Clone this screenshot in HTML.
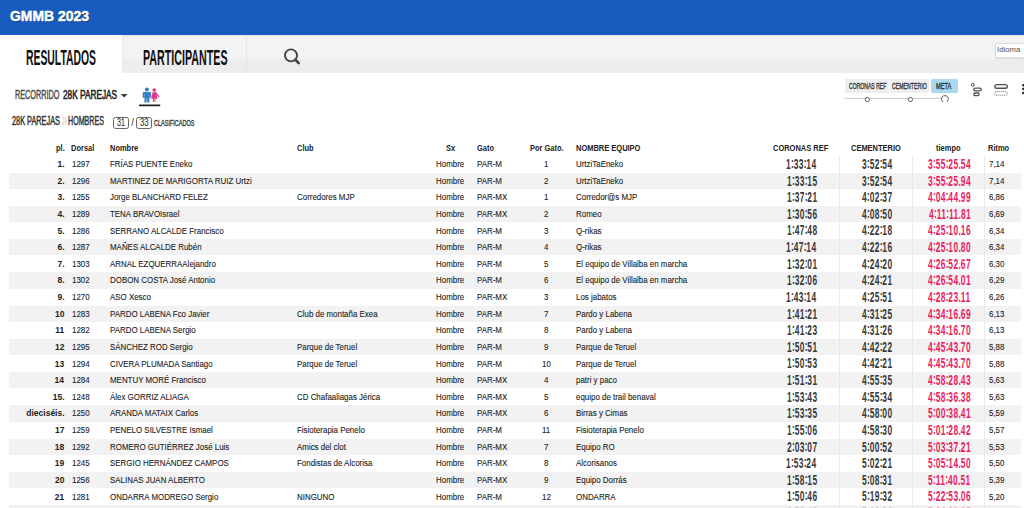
<!DOCTYPE html><html><head><meta charset="utf-8"><style>
*{margin:0;padding:0;box-sizing:border-box}
html,body{width:1024px;height:508px;overflow:hidden;background:#fff;position:relative;font-family:"Liberation Sans",sans-serif}
.t{position:absolute;white-space:nowrap;transform-origin:0 0}
.abs{position:absolute}
</style></head><body>
<div class="abs" style="left:0;top:0;width:1024px;height:35px;background:#185bbe"></div>
<div class="t" style="left:10.04px;top:9px;font-size:14.49px;line-height:14.49px;transform:scaleX(0.9628);color:#fff;font-weight:bold;-webkit-text-stroke:0.5px #fff;text-shadow:0.5px 0.7px 0.8px rgba(0,0,0,.45);">GMMB 2023</div>
<div class="abs" style="left:122px;top:35px;width:902px;height:37.5px;background:linear-gradient(#f3f3f3 0,#f3f3f3 24px,#ededed 24px);box-shadow:inset 0 1px 1.5px rgba(0,0,0,.07)"></div>
<div class="abs" style="left:246px;top:35px;width:1px;height:37.5px;background:#e3e3e3"></div>
<div class="abs" style="left:121.5px;top:35px;width:1px;height:37.5px;background:#e8e8e8"></div>
<div class="t" style="left:26.32px;top:48px;font-size:21.30px;line-height:21.30px;transform:scaleX(0.4878);color:#111;font-weight:bold;">RESULTADOS</div>
<div class="t" style="left:143.10px;top:48px;font-size:21.30px;line-height:21.30px;transform:scaleX(0.5022);color:#111;font-weight:bold;">PARTICIPANTES</div>
<svg class="abs" style="left:282px;top:48px" width="20" height="18" viewBox="0 0 20 18"><circle cx="9" cy="7.4" r="6.0" fill="none" stroke="#444" stroke-width="1.9"/><line x1="13.3" y1="11.7" x2="16.7" y2="15.1" stroke="#444" stroke-width="2.7" stroke-linecap="round"/></svg>
<div class="abs" style="left:994.7px;top:42.9px;width:32px;height:14.7px;background:#fff;border:1px solid #dcdcdc;border-radius:2px;box-shadow:0 0.5px 1px rgba(0,0,0,.08)"></div>
<div class="t" style="left:997.20px;top:46px;font-size:7.83px;line-height:7.83px;transform:scaleX(0.9880);color:#505050;">Idioma</div>
<div class="t" style="left:15.42px;top:88px;font-size:13.48px;line-height:13.48px;transform:scaleX(0.5405);color:#4a4a4a;-webkit-text-stroke:0.45px #4a4a4a;">RECORRIDO</div>
<div class="t" style="left:63.09px;top:88px;font-size:13.48px;line-height:13.48px;transform:scaleX(0.6136);color:#1e1e1e;-webkit-text-stroke:0.6px #1e1e1e;">28K PAREJAS</div>
<svg class="abs" style="left:120px;top:93px" width="9" height="6"><path d="M0.7 1.0 L7.7 1.0 L4.2 4.6 Z" fill="#3a3a3a"/></svg>
<svg class="abs" style="left:134px;top:84px" width="32" height="26" viewBox="0 0 32 26">
<circle cx="12.9" cy="5.6" r="2.0" fill="#2f7ec8"/>
<path d="M8.7 9.2 Q8.7 7.9 10 7.9 H15.85 Q17.15 7.9 17.15 9.2 V13.3 Q17.15 13.8 16.65 13.8 H15.4 V18.4 H13.2 V14.6 H12.65 V18.4 H10.5 V13.8 H9.2 Q8.7 13.8 8.7 13.3 Z" fill="#2f7ec8"/>
<path d="M10.5 9.6 V13.8 M15.4 9.6 V13.8" stroke="#fff" stroke-width="0.35" stroke-opacity="0.55"/>
<circle cx="20.2" cy="6.1" r="1.8" fill="#e5338b"/>
<path d="M18.6 8.2 H21.9 L23.55 14.85 H17.15 Z" fill="#e5338b"/>
<path d="M21.7 8.7 L24.8 12.6" stroke="#e5338b" stroke-width="1.3" stroke-linecap="round"/>
<rect x="18.9" y="14.5" width="1.15" height="3.3" fill="#e5338b"/>
<rect x="20.35" y="14.5" width="1.15" height="3.3" fill="#e5338b"/>
<rect x="4.9" y="20.5" width="21.5" height="1.8" rx="0.9" fill="#222"/>
</svg>
<div class="t" style="left:12.33px;top:116px;font-size:11.88px;line-height:11.88px;transform:scaleX(0.6176);color:#333;-webkit-text-stroke:0.45px #333;">28K PAREJAS</div>
<svg class="abs" style="left:60px;top:114px" width="10" height="14"><path d="M2.8 2.8 L4.3 6.8 L2.8 10.8 M4.9 2.8 L6.4 6.8 L4.9 10.8" fill="none" stroke="#c4c4c4" stroke-width="0.8"/></svg>
<div class="t" style="left:68.18px;top:116px;font-size:11.88px;line-height:11.88px;transform:scaleX(0.5999);color:#333;-webkit-text-stroke:0.45px #333;">HOMBRES</div>
<div class="abs" style="left:113.2px;top:117px;width:15.8px;height:11.7px;border:1px solid #666;border-radius:2.5px"></div>
<div class="t" style="left:116.82px;top:118px;font-size:10.14px;line-height:10.14px;transform:scaleX(0.7020);color:#333;-webkit-text-stroke:0.12px #333;">31</div>
<div class="abs" style="left:136.3px;top:117px;width:15.7px;height:11.7px;border:1px solid #666;border-radius:2.5px"></div>
<div class="t" style="left:140.19px;top:118px;font-size:10.14px;line-height:10.14px;transform:scaleX(0.7656);color:#333;-webkit-text-stroke:0.12px #333;">33</div>
<div class="t" style="left:131.20px;top:118px;font-size:10.00px;line-height:10.00px;transform:scaleX(1.0000);color:#444;">/</div>
<div class="t" style="left:154.42px;top:119px;font-size:9.28px;line-height:9.28px;transform:scaleX(0.5956);color:#333;-webkit-text-stroke:0.35px #333;">CLASIFICADOS</div>
<div class="abs" style="left:844.6px;top:79.1px;width:44.1px;height:14px;background:#eee"></div>
<div class="abs" style="left:890.3px;top:79.1px;width:38.7px;height:14px;background:#eee"></div>
<div class="abs" style="left:930.8px;top:79.1px;width:26.9px;height:14px;background:#a9d9ef;border-radius:1.5px"></div>
<div class="t" style="left:849.45px;top:82px;font-size:8.99px;line-height:8.99px;transform:scaleX(0.5668);color:#333;-webkit-text-stroke:0.35px #333;">CORONAS REF</div>
<div class="t" style="left:892.44px;top:82px;font-size:8.99px;line-height:8.99px;transform:scaleX(0.5810);color:#333;-webkit-text-stroke:0.35px #333;">CEMENTERIO</div>
<div class="t" style="left:935.85px;top:82px;font-size:8.99px;line-height:8.99px;transform:scaleX(0.6329);color:#333;-webkit-text-stroke:0.35px #333;">META</div>
<svg class="abs" style="left:840px;top:90px" width="120" height="16"><line x1="4.6" y1="8.3" x2="101" y2="8.3" stroke="#c8c8c8" stroke-width="1"/><circle cx="27.3" cy="9.5" r="2.1" fill="#fff" stroke="#555" stroke-width="0.95"/><circle cx="70.4" cy="9.5" r="2.1" fill="#fff" stroke="#555" stroke-width="0.95"/><path d="M103.2 12.0 A3.4 3.4 0 1 1 106.6 12.0" fill="#fff" stroke="#555" stroke-width="1"/></svg>
<svg class="abs" style="left:964px;top:76px" width="60" height="28"><circle cx="8.9" cy="8.9" r="1.45" fill="none" stroke="#505050" stroke-width="1"/><rect x="9.75" y="12.05" width="7.5" height="2.9" rx="1.45" fill="none" stroke="#505050" stroke-width="1.3"/><rect x="9.75" y="17.0" width="5.4" height="2.6" rx="1.3" fill="none" stroke="#505050" stroke-width="1.3"/><rect x="30.85" y="8.55" width="12.4" height="3.7" rx="1.85" fill="none" stroke="#505050" stroke-width="1.35"/><rect x="30.85" y="15.55" width="12.4" height="3.7" rx="1.85" fill="none" stroke="#9a9a9a" stroke-width="1.1" stroke-dasharray="1.4 0.6"/><rect x="58" y="7.9" width="3.2" height="2.5" rx="1.1" fill="#333"/><rect x="58" y="11.7" width="3.2" height="2.5" rx="1.1" fill="#333"/><rect x="58" y="15.8" width="3.2" height="2.5" rx="1.1" fill="#333"/></svg>
<div class="t" style="left:55.77px;top:144px;font-size:8.50px;line-height:8.50px;transform:scaleX(0.8800);color:#222;font-weight:bold;">pl.</div>
<div class="t" style="left:71.11px;top:144px;font-size:8.50px;line-height:8.50px;transform:scaleX(0.8800);color:#222;font-weight:bold;">Dorsal</div>
<div class="t" style="left:109.61px;top:144px;font-size:8.50px;line-height:8.50px;transform:scaleX(0.8800);color:#222;font-weight:bold;">Nombre</div>
<div class="t" style="left:296.70px;top:144px;font-size:8.50px;line-height:8.50px;transform:scaleX(0.8800);color:#222;font-weight:bold;">Club</div>
<div class="t" style="left:445.54px;top:144px;font-size:8.50px;line-height:8.50px;transform:scaleX(0.8800);color:#222;font-weight:bold;">Sx</div>
<div class="t" style="left:476.70px;top:144px;font-size:8.50px;line-height:8.50px;transform:scaleX(0.8800);color:#222;font-weight:bold;">Gato</div>
<div class="t" style="left:529.77px;top:144px;font-size:8.50px;line-height:8.50px;transform:scaleX(0.8800);color:#222;font-weight:bold;">Por Gato.</div>
<div class="t" style="left:575.61px;top:144px;font-size:8.50px;line-height:8.50px;transform:scaleX(0.8800);color:#222;font-weight:bold;">NOMBRE EQUIPO</div>
<div class="t" style="left:773.14px;top:144px;font-size:8.50px;line-height:8.50px;transform:scaleX(0.8800);color:#222;font-weight:bold;">CORONAS REF</div>
<div class="t" style="left:851.27px;top:144px;font-size:8.50px;line-height:8.50px;transform:scaleX(0.8800);color:#222;font-weight:bold;">CEMENTERIO</div>
<div class="t" style="left:936.36px;top:144px;font-size:8.50px;line-height:8.50px;transform:scaleX(0.8800);color:#222;font-weight:bold;">tiempo</div>
<div class="t" style="left:988.21px;top:144px;font-size:8.50px;line-height:8.50px;transform:scaleX(0.8800);color:#222;font-weight:bold;">Ritmo</div>
<div class="abs" style="left:9.4px;top:172.72px;width:1011.6px;height:16.15px;background:#f2f2f2"></div>
<div class="abs" style="left:9.4px;top:205.96px;width:1011.6px;height:16.15px;background:#f2f2f2"></div>
<div class="abs" style="left:9.4px;top:239.20px;width:1011.6px;height:16.15px;background:#f2f2f2"></div>
<div class="abs" style="left:9.4px;top:272.44px;width:1011.6px;height:16.15px;background:#f2f2f2"></div>
<div class="abs" style="left:9.4px;top:305.68px;width:1011.6px;height:16.15px;background:#f2f2f2"></div>
<div class="abs" style="left:9.4px;top:338.92px;width:1011.6px;height:16.15px;background:#f2f2f2"></div>
<div class="abs" style="left:9.4px;top:372.16px;width:1011.6px;height:16.15px;background:#f2f2f2"></div>
<div class="abs" style="left:9.4px;top:405.40px;width:1011.6px;height:16.15px;background:#f2f2f2"></div>
<div class="abs" style="left:9.4px;top:438.64px;width:1011.6px;height:16.15px;background:#f2f2f2"></div>
<div class="abs" style="left:9.4px;top:471.88px;width:1011.6px;height:16.15px;background:#f2f2f2"></div>
<div class="abs" style="left:9.4px;top:505.12px;width:1011.6px;height:16.15px;background:#f2f2f2"></div>
<div class="abs" style="left:838.95px;top:155.8px;width:1.5px;height:360px;background:#e9e9e9"></div>
<div class="abs" style="left:911.85px;top:155.8px;width:1.5px;height:360px;background:#e9e9e9"></div>
<div class="abs" style="left:983.75px;top:155.8px;width:1.5px;height:360px;background:#e9e9e9"></div>
<div class="t" style="left:57.50px;top:160px;font-size:8.50px;line-height:8.50px;transform:scaleX(1.0000);color:#222;font-weight:bold;">1.</div>
<div class="t" style="left:71.91px;top:160px;font-size:8.50px;line-height:8.50px;transform:scaleX(0.9320);color:#222;-webkit-text-stroke:0.1px #222;">1297</div>
<div class="t" style="left:110.26px;top:160px;font-size:8.50px;line-height:8.50px;transform:scaleX(0.9320);color:#222;-webkit-text-stroke:0.1px #222;">FRÍAS PUENTE Eneko</div>
<div class="t" style="left:435.68px;top:160px;font-size:8.50px;line-height:8.50px;transform:scaleX(0.9320);color:#222;-webkit-text-stroke:0.1px #222;">Hombre</div>
<div class="t" style="left:477.16px;top:160px;font-size:8.50px;line-height:8.50px;transform:scaleX(0.9320);color:#222;-webkit-text-stroke:0.1px #222;">PAR-M</div>
<div class="t" style="left:544.08px;top:160px;font-size:8.50px;line-height:8.50px;transform:scaleX(0.9320);color:#222;-webkit-text-stroke:0.1px #222;">1</div>
<div class="t" style="left:576.26px;top:160px;font-size:8.50px;line-height:8.50px;transform:scaleX(0.9320);color:#222;-webkit-text-stroke:0.1px #222;">UrtziTaEneko</div>
<div class="t" style="left:786.46px;top:157px;font-size:14.60px;line-height:14.60px;letter-spacing:0.65px;transform:scaleX(0.5750);color:#3a3a3a;font-weight:bold;">1<span style="letter-spacing:-0.34px;position:relative;top:-1.3px">:</span>33<span style="letter-spacing:-0.34px;position:relative;top:-1.3px">:</span>14</div>
<div class="t" style="left:861.80px;top:157px;font-size:14.60px;line-height:14.60px;letter-spacing:0.65px;transform:scaleX(0.5750);color:#3a3a3a;font-weight:bold;">3<span style="letter-spacing:-0.34px;position:relative;top:-1.3px">:</span>52<span style="letter-spacing:-0.34px;position:relative;top:-1.3px">:</span>54</div>
<div class="t" style="left:928.06px;top:157px;font-size:14.60px;line-height:14.60px;letter-spacing:0.65px;transform:scaleX(0.5750);color:#e91e63;font-weight:bold;">3<span style="letter-spacing:-0.34px;position:relative;top:-1.3px">:</span>55<span style="letter-spacing:-0.34px;position:relative;top:-1.3px">:</span>25<span style="letter-spacing:0.12px">.</span>54</div>
<div class="t" style="left:989.36px;top:160px;font-size:8.50px;line-height:8.50px;transform:scaleX(0.9320);color:#222;-webkit-text-stroke:0.1px #222;">7,14</div>
<div class="t" style="left:57.50px;top:177px;font-size:8.50px;line-height:8.50px;transform:scaleX(1.0000);color:#222;font-weight:bold;">2.</div>
<div class="t" style="left:71.91px;top:177px;font-size:8.50px;line-height:8.50px;transform:scaleX(0.9320);color:#222;-webkit-text-stroke:0.1px #222;">1296</div>
<div class="t" style="left:110.26px;top:177px;font-size:8.50px;line-height:8.50px;transform:scaleX(0.9320);color:#222;-webkit-text-stroke:0.1px #222;">MARTINEZ DE MARIGORTA RUIZ Urtzi</div>
<div class="t" style="left:435.68px;top:177px;font-size:8.50px;line-height:8.50px;transform:scaleX(0.9320);color:#222;-webkit-text-stroke:0.1px #222;">Hombre</div>
<div class="t" style="left:477.16px;top:177px;font-size:8.50px;line-height:8.50px;transform:scaleX(0.9320);color:#222;-webkit-text-stroke:0.1px #222;">PAR-M</div>
<div class="t" style="left:544.20px;top:177px;font-size:8.50px;line-height:8.50px;transform:scaleX(0.9320);color:#222;-webkit-text-stroke:0.1px #222;">2</div>
<div class="t" style="left:576.26px;top:177px;font-size:8.50px;line-height:8.50px;transform:scaleX(0.9320);color:#222;-webkit-text-stroke:0.1px #222;">UrtziTaEneko</div>
<div class="t" style="left:786.54px;top:174px;font-size:14.60px;line-height:14.60px;letter-spacing:0.65px;transform:scaleX(0.5750);color:#3a3a3a;font-weight:bold;">1<span style="letter-spacing:-0.34px;position:relative;top:-1.3px">:</span>33<span style="letter-spacing:-0.34px;position:relative;top:-1.3px">:</span>15</div>
<div class="t" style="left:861.80px;top:174px;font-size:14.60px;line-height:14.60px;letter-spacing:0.65px;transform:scaleX(0.5750);color:#3a3a3a;font-weight:bold;">3<span style="letter-spacing:-0.34px;position:relative;top:-1.3px">:</span>52<span style="letter-spacing:-0.34px;position:relative;top:-1.3px">:</span>54</div>
<div class="t" style="left:928.06px;top:174px;font-size:14.60px;line-height:14.60px;letter-spacing:0.65px;transform:scaleX(0.5750);color:#e91e63;font-weight:bold;">3<span style="letter-spacing:-0.34px;position:relative;top:-1.3px">:</span>55<span style="letter-spacing:-0.34px;position:relative;top:-1.3px">:</span>25<span style="letter-spacing:0.12px">.</span>94</div>
<div class="t" style="left:989.36px;top:177px;font-size:8.50px;line-height:8.50px;transform:scaleX(0.9320);color:#222;-webkit-text-stroke:0.1px #222;">7,14</div>
<div class="t" style="left:57.50px;top:193px;font-size:8.50px;line-height:8.50px;transform:scaleX(1.0000);color:#222;font-weight:bold;">3.</div>
<div class="t" style="left:71.91px;top:193px;font-size:8.50px;line-height:8.50px;transform:scaleX(0.9320);color:#222;-webkit-text-stroke:0.1px #222;">1255</div>
<div class="t" style="left:110.26px;top:193px;font-size:8.50px;line-height:8.50px;transform:scaleX(0.9320);color:#222;-webkit-text-stroke:0.1px #222;">Jorge BLANCHARD FELEZ</div>
<div class="t" style="left:297.16px;top:193px;font-size:8.50px;line-height:8.50px;transform:scaleX(0.9320);color:#222;-webkit-text-stroke:0.1px #222;">Corredores MJP</div>
<div class="t" style="left:435.68px;top:193px;font-size:8.50px;line-height:8.50px;transform:scaleX(0.9320);color:#222;-webkit-text-stroke:0.1px #222;">Hombre</div>
<div class="t" style="left:477.16px;top:193px;font-size:8.50px;line-height:8.50px;transform:scaleX(0.9320);color:#222;-webkit-text-stroke:0.1px #222;">PAR-MX</div>
<div class="t" style="left:544.08px;top:193px;font-size:8.50px;line-height:8.50px;transform:scaleX(0.9320);color:#222;-webkit-text-stroke:0.1px #222;">1</div>
<div class="t" style="left:576.26px;top:193px;font-size:8.50px;line-height:8.50px;transform:scaleX(0.9320);color:#222;-webkit-text-stroke:0.1px #222;">Corredor@s MJP</div>
<div class="t" style="left:786.54px;top:190px;font-size:14.60px;line-height:14.60px;letter-spacing:0.65px;transform:scaleX(0.5750);color:#3a3a3a;font-weight:bold;">1<span style="letter-spacing:-0.34px;position:relative;top:-1.3px">:</span>37<span style="letter-spacing:-0.34px;position:relative;top:-1.3px">:</span>21</div>
<div class="t" style="left:861.99px;top:190px;font-size:14.60px;line-height:14.60px;letter-spacing:0.65px;transform:scaleX(0.5750);color:#3a3a3a;font-weight:bold;">4<span style="letter-spacing:-0.34px;position:relative;top:-1.3px">:</span>02<span style="letter-spacing:-0.34px;position:relative;top:-1.3px">:</span>37</div>
<div class="t" style="left:928.23px;top:190px;font-size:14.60px;line-height:14.60px;letter-spacing:0.65px;transform:scaleX(0.5750);color:#e91e63;font-weight:bold;">4<span style="letter-spacing:-0.34px;position:relative;top:-1.3px">:</span>04<span style="letter-spacing:-0.34px;position:relative;top:-1.3px">:</span>44<span style="letter-spacing:0.12px">.</span>99</div>
<div class="t" style="left:989.36px;top:193px;font-size:8.50px;line-height:8.50px;transform:scaleX(0.9320);color:#222;-webkit-text-stroke:0.1px #222;">6,86</div>
<div class="t" style="left:57.50px;top:210px;font-size:8.50px;line-height:8.50px;transform:scaleX(1.0000);color:#222;font-weight:bold;">4.</div>
<div class="t" style="left:71.91px;top:210px;font-size:8.50px;line-height:8.50px;transform:scaleX(0.9320);color:#222;-webkit-text-stroke:0.1px #222;">1289</div>
<div class="t" style="left:110.26px;top:210px;font-size:8.50px;line-height:8.50px;transform:scaleX(0.9320);color:#222;-webkit-text-stroke:0.1px #222;">TENA BRAVOIsrael</div>
<div class="t" style="left:435.68px;top:210px;font-size:8.50px;line-height:8.50px;transform:scaleX(0.9320);color:#222;-webkit-text-stroke:0.1px #222;">Hombre</div>
<div class="t" style="left:477.16px;top:210px;font-size:8.50px;line-height:8.50px;transform:scaleX(0.9320);color:#222;-webkit-text-stroke:0.1px #222;">PAR-MX</div>
<div class="t" style="left:544.20px;top:210px;font-size:8.50px;line-height:8.50px;transform:scaleX(0.9320);color:#222;-webkit-text-stroke:0.1px #222;">2</div>
<div class="t" style="left:576.26px;top:210px;font-size:8.50px;line-height:8.50px;transform:scaleX(0.9320);color:#222;-webkit-text-stroke:0.1px #222;">Romeo</div>
<div class="t" style="left:786.58px;top:207px;font-size:14.60px;line-height:14.60px;letter-spacing:0.65px;transform:scaleX(0.5750);color:#3a3a3a;font-weight:bold;">1<span style="letter-spacing:-0.34px;position:relative;top:-1.3px">:</span>30<span style="letter-spacing:-0.34px;position:relative;top:-1.3px">:</span>56</div>
<div class="t" style="left:861.99px;top:207px;font-size:14.60px;line-height:14.60px;letter-spacing:0.65px;transform:scaleX(0.5750);color:#3a3a3a;font-weight:bold;">4<span style="letter-spacing:-0.34px;position:relative;top:-1.3px">:</span>08<span style="letter-spacing:-0.34px;position:relative;top:-1.3px">:</span>50</div>
<div class="t" style="left:928.65px;top:207px;font-size:14.60px;line-height:14.60px;letter-spacing:0.65px;transform:scaleX(0.5750);color:#e91e63;font-weight:bold;">4<span style="letter-spacing:-0.34px;position:relative;top:-1.3px">:</span>11<span style="letter-spacing:-0.34px;position:relative;top:-1.3px">:</span>11<span style="letter-spacing:0.12px">.</span>81</div>
<div class="t" style="left:989.36px;top:210px;font-size:8.50px;line-height:8.50px;transform:scaleX(0.9320);color:#222;-webkit-text-stroke:0.1px #222;">6,69</div>
<div class="t" style="left:57.50px;top:227px;font-size:8.50px;line-height:8.50px;transform:scaleX(1.0000);color:#222;font-weight:bold;">5.</div>
<div class="t" style="left:71.91px;top:227px;font-size:8.50px;line-height:8.50px;transform:scaleX(0.9320);color:#222;-webkit-text-stroke:0.1px #222;">1286</div>
<div class="t" style="left:110.26px;top:227px;font-size:8.50px;line-height:8.50px;transform:scaleX(0.9320);color:#222;-webkit-text-stroke:0.1px #222;">SERRANO ALCALDE Francisco</div>
<div class="t" style="left:435.68px;top:227px;font-size:8.50px;line-height:8.50px;transform:scaleX(0.9320);color:#222;-webkit-text-stroke:0.1px #222;">Hombre</div>
<div class="t" style="left:477.16px;top:227px;font-size:8.50px;line-height:8.50px;transform:scaleX(0.9320);color:#222;-webkit-text-stroke:0.1px #222;">PAR-M</div>
<div class="t" style="left:544.20px;top:227px;font-size:8.50px;line-height:8.50px;transform:scaleX(0.9320);color:#222;-webkit-text-stroke:0.1px #222;">3</div>
<div class="t" style="left:576.26px;top:227px;font-size:8.50px;line-height:8.50px;transform:scaleX(0.9320);color:#222;-webkit-text-stroke:0.1px #222;">Q-rikas</div>
<div class="t" style="left:786.56px;top:223px;font-size:14.60px;line-height:14.60px;letter-spacing:0.65px;transform:scaleX(0.5750);color:#3a3a3a;font-weight:bold;">1<span style="letter-spacing:-0.34px;position:relative;top:-1.3px">:</span>47<span style="letter-spacing:-0.34px;position:relative;top:-1.3px">:</span>48</div>
<div class="t" style="left:861.95px;top:223px;font-size:14.60px;line-height:14.60px;letter-spacing:0.65px;transform:scaleX(0.5750);color:#3a3a3a;font-weight:bold;">4<span style="letter-spacing:-0.34px;position:relative;top:-1.3px">:</span>22<span style="letter-spacing:-0.34px;position:relative;top:-1.3px">:</span>18</div>
<div class="t" style="left:928.23px;top:223px;font-size:14.60px;line-height:14.60px;letter-spacing:0.65px;transform:scaleX(0.5750);color:#e91e63;font-weight:bold;">4<span style="letter-spacing:-0.34px;position:relative;top:-1.3px">:</span>25<span style="letter-spacing:-0.34px;position:relative;top:-1.3px">:</span>10<span style="letter-spacing:0.12px">.</span>16</div>
<div class="t" style="left:989.36px;top:227px;font-size:8.50px;line-height:8.50px;transform:scaleX(0.9320);color:#222;-webkit-text-stroke:0.1px #222;">6,34</div>
<div class="t" style="left:57.50px;top:243px;font-size:8.50px;line-height:8.50px;transform:scaleX(1.0000);color:#222;font-weight:bold;">6.</div>
<div class="t" style="left:71.91px;top:243px;font-size:8.50px;line-height:8.50px;transform:scaleX(0.9320);color:#222;-webkit-text-stroke:0.1px #222;">1287</div>
<div class="t" style="left:110.26px;top:243px;font-size:8.50px;line-height:8.50px;transform:scaleX(0.9320);color:#222;-webkit-text-stroke:0.1px #222;">MAÑES ALCALDE Rubén</div>
<div class="t" style="left:435.68px;top:243px;font-size:8.50px;line-height:8.50px;transform:scaleX(0.9320);color:#222;-webkit-text-stroke:0.1px #222;">Hombre</div>
<div class="t" style="left:477.16px;top:243px;font-size:8.50px;line-height:8.50px;transform:scaleX(0.9320);color:#222;-webkit-text-stroke:0.1px #222;">PAR-M</div>
<div class="t" style="left:544.24px;top:243px;font-size:8.50px;line-height:8.50px;transform:scaleX(0.9320);color:#222;-webkit-text-stroke:0.1px #222;">4</div>
<div class="t" style="left:576.26px;top:243px;font-size:8.50px;line-height:8.50px;transform:scaleX(0.9320);color:#222;-webkit-text-stroke:0.1px #222;">Q-rikas</div>
<div class="t" style="left:786.46px;top:240px;font-size:14.60px;line-height:14.60px;letter-spacing:0.65px;transform:scaleX(0.5750);color:#3a3a3a;font-weight:bold;">1<span style="letter-spacing:-0.34px;position:relative;top:-1.3px">:</span>47<span style="letter-spacing:-0.34px;position:relative;top:-1.3px">:</span>14</div>
<div class="t" style="left:861.97px;top:240px;font-size:14.60px;line-height:14.60px;letter-spacing:0.65px;transform:scaleX(0.5750);color:#3a3a3a;font-weight:bold;">4<span style="letter-spacing:-0.34px;position:relative;top:-1.3px">:</span>22<span style="letter-spacing:-0.34px;position:relative;top:-1.3px">:</span>16</div>
<div class="t" style="left:928.25px;top:240px;font-size:14.60px;line-height:14.60px;letter-spacing:0.65px;transform:scaleX(0.5750);color:#e91e63;font-weight:bold;">4<span style="letter-spacing:-0.34px;position:relative;top:-1.3px">:</span>25<span style="letter-spacing:-0.34px;position:relative;top:-1.3px">:</span>10<span style="letter-spacing:0.12px">.</span>80</div>
<div class="t" style="left:989.36px;top:243px;font-size:8.50px;line-height:8.50px;transform:scaleX(0.9320);color:#222;-webkit-text-stroke:0.1px #222;">6,34</div>
<div class="t" style="left:57.50px;top:260px;font-size:8.50px;line-height:8.50px;transform:scaleX(1.0000);color:#222;font-weight:bold;">7.</div>
<div class="t" style="left:71.91px;top:260px;font-size:8.50px;line-height:8.50px;transform:scaleX(0.9320);color:#222;-webkit-text-stroke:0.1px #222;">1303</div>
<div class="t" style="left:110.26px;top:260px;font-size:8.50px;line-height:8.50px;transform:scaleX(0.9320);color:#222;-webkit-text-stroke:0.1px #222;">ARNAL EZQUERRAAlejandro</div>
<div class="t" style="left:435.68px;top:260px;font-size:8.50px;line-height:8.50px;transform:scaleX(0.9320);color:#222;-webkit-text-stroke:0.1px #222;">Hombre</div>
<div class="t" style="left:477.16px;top:260px;font-size:8.50px;line-height:8.50px;transform:scaleX(0.9320);color:#222;-webkit-text-stroke:0.1px #222;">PAR-M</div>
<div class="t" style="left:544.20px;top:260px;font-size:8.50px;line-height:8.50px;transform:scaleX(0.9320);color:#222;-webkit-text-stroke:0.1px #222;">5</div>
<div class="t" style="left:576.26px;top:260px;font-size:8.50px;line-height:8.50px;transform:scaleX(0.9320);color:#222;-webkit-text-stroke:0.1px #222;">El equipo de Villalba en marcha</div>
<div class="t" style="left:786.54px;top:257px;font-size:14.60px;line-height:14.60px;letter-spacing:0.65px;transform:scaleX(0.5750);color:#3a3a3a;font-weight:bold;">1<span style="letter-spacing:-0.34px;position:relative;top:-1.3px">:</span>32<span style="letter-spacing:-0.34px;position:relative;top:-1.3px">:</span>01</div>
<div class="t" style="left:861.99px;top:257px;font-size:14.60px;line-height:14.60px;letter-spacing:0.65px;transform:scaleX(0.5750);color:#3a3a3a;font-weight:bold;">4<span style="letter-spacing:-0.34px;position:relative;top:-1.3px">:</span>24<span style="letter-spacing:-0.34px;position:relative;top:-1.3px">:</span>20</div>
<div class="t" style="left:928.25px;top:257px;font-size:14.60px;line-height:14.60px;letter-spacing:0.65px;transform:scaleX(0.5750);color:#e91e63;font-weight:bold;">4<span style="letter-spacing:-0.34px;position:relative;top:-1.3px">:</span>26<span style="letter-spacing:-0.34px;position:relative;top:-1.3px">:</span>52<span style="letter-spacing:0.12px">.</span>67</div>
<div class="t" style="left:989.36px;top:260px;font-size:8.50px;line-height:8.50px;transform:scaleX(0.9320);color:#222;-webkit-text-stroke:0.1px #222;">6,30</div>
<div class="t" style="left:57.50px;top:276px;font-size:8.50px;line-height:8.50px;transform:scaleX(1.0000);color:#222;font-weight:bold;">8.</div>
<div class="t" style="left:71.91px;top:276px;font-size:8.50px;line-height:8.50px;transform:scaleX(0.9320);color:#222;-webkit-text-stroke:0.1px #222;">1302</div>
<div class="t" style="left:110.26px;top:276px;font-size:8.50px;line-height:8.50px;transform:scaleX(0.9320);color:#222;-webkit-text-stroke:0.1px #222;">DOBON COSTA José Antonio</div>
<div class="t" style="left:435.68px;top:276px;font-size:8.50px;line-height:8.50px;transform:scaleX(0.9320);color:#222;-webkit-text-stroke:0.1px #222;">Hombre</div>
<div class="t" style="left:477.16px;top:276px;font-size:8.50px;line-height:8.50px;transform:scaleX(0.9320);color:#222;-webkit-text-stroke:0.1px #222;">PAR-M</div>
<div class="t" style="left:544.16px;top:276px;font-size:8.50px;line-height:8.50px;transform:scaleX(0.9320);color:#222;-webkit-text-stroke:0.1px #222;">6</div>
<div class="t" style="left:576.26px;top:276px;font-size:8.50px;line-height:8.50px;transform:scaleX(0.9320);color:#222;-webkit-text-stroke:0.1px #222;">El equipo de Villalba en marcha</div>
<div class="t" style="left:786.58px;top:273px;font-size:14.60px;line-height:14.60px;letter-spacing:0.65px;transform:scaleX(0.5750);color:#3a3a3a;font-weight:bold;">1<span style="letter-spacing:-0.34px;position:relative;top:-1.3px">:</span>32<span style="letter-spacing:-0.34px;position:relative;top:-1.3px">:</span>06</div>
<div class="t" style="left:861.93px;top:273px;font-size:14.60px;line-height:14.60px;letter-spacing:0.65px;transform:scaleX(0.5750);color:#3a3a3a;font-weight:bold;">4<span style="letter-spacing:-0.34px;position:relative;top:-1.3px">:</span>24<span style="letter-spacing:-0.34px;position:relative;top:-1.3px">:</span>21</div>
<div class="t" style="left:928.19px;top:273px;font-size:14.60px;line-height:14.60px;letter-spacing:0.65px;transform:scaleX(0.5750);color:#e91e63;font-weight:bold;">4<span style="letter-spacing:-0.34px;position:relative;top:-1.3px">:</span>26<span style="letter-spacing:-0.34px;position:relative;top:-1.3px">:</span>54<span style="letter-spacing:0.12px">.</span>01</div>
<div class="t" style="left:989.36px;top:276px;font-size:8.50px;line-height:8.50px;transform:scaleX(0.9320);color:#222;-webkit-text-stroke:0.1px #222;">6,29</div>
<div class="t" style="left:57.50px;top:293px;font-size:8.50px;line-height:8.50px;transform:scaleX(1.0000);color:#222;font-weight:bold;">9.</div>
<div class="t" style="left:71.91px;top:293px;font-size:8.50px;line-height:8.50px;transform:scaleX(0.9320);color:#222;-webkit-text-stroke:0.1px #222;">1270</div>
<div class="t" style="left:110.26px;top:293px;font-size:8.50px;line-height:8.50px;transform:scaleX(0.9320);color:#222;-webkit-text-stroke:0.1px #222;">ASO Xesco</div>
<div class="t" style="left:435.68px;top:293px;font-size:8.50px;line-height:8.50px;transform:scaleX(0.9320);color:#222;-webkit-text-stroke:0.1px #222;">Hombre</div>
<div class="t" style="left:477.16px;top:293px;font-size:8.50px;line-height:8.50px;transform:scaleX(0.9320);color:#222;-webkit-text-stroke:0.1px #222;">PAR-MX</div>
<div class="t" style="left:544.20px;top:293px;font-size:8.50px;line-height:8.50px;transform:scaleX(0.9320);color:#222;-webkit-text-stroke:0.1px #222;">3</div>
<div class="t" style="left:576.26px;top:293px;font-size:8.50px;line-height:8.50px;transform:scaleX(0.9320);color:#222;-webkit-text-stroke:0.1px #222;">Los jabatos</div>
<div class="t" style="left:786.46px;top:290px;font-size:14.60px;line-height:14.60px;letter-spacing:0.65px;transform:scaleX(0.5750);color:#3a3a3a;font-weight:bold;">1<span style="letter-spacing:-0.34px;position:relative;top:-1.3px">:</span>43<span style="letter-spacing:-0.34px;position:relative;top:-1.3px">:</span>14</div>
<div class="t" style="left:861.93px;top:290px;font-size:14.60px;line-height:14.60px;letter-spacing:0.65px;transform:scaleX(0.5750);color:#3a3a3a;font-weight:bold;">4<span style="letter-spacing:-0.34px;position:relative;top:-1.3px">:</span>25<span style="letter-spacing:-0.34px;position:relative;top:-1.3px">:</span>51</div>
<div class="t" style="left:928.42px;top:290px;font-size:14.60px;line-height:14.60px;letter-spacing:0.65px;transform:scaleX(0.5750);color:#e91e63;font-weight:bold;">4<span style="letter-spacing:-0.34px;position:relative;top:-1.3px">:</span>28<span style="letter-spacing:-0.34px;position:relative;top:-1.3px">:</span>23<span style="letter-spacing:0.12px">.</span>11</div>
<div class="t" style="left:989.36px;top:293px;font-size:8.50px;line-height:8.50px;transform:scaleX(0.9320);color:#222;-webkit-text-stroke:0.1px #222;">6,26</div>
<div class="t" style="left:54.91px;top:310px;font-size:8.50px;line-height:8.50px;transform:scaleX(1.0000);color:#222;font-weight:bold;">10</div>
<div class="t" style="left:71.91px;top:310px;font-size:8.50px;line-height:8.50px;transform:scaleX(0.9320);color:#222;-webkit-text-stroke:0.1px #222;">1283</div>
<div class="t" style="left:110.26px;top:310px;font-size:8.50px;line-height:8.50px;transform:scaleX(0.9320);color:#222;-webkit-text-stroke:0.1px #222;">PARDO LABENA Fco Javier</div>
<div class="t" style="left:297.16px;top:310px;font-size:8.50px;line-height:8.50px;transform:scaleX(0.9320);color:#222;-webkit-text-stroke:0.1px #222;">Club de montaña Exea</div>
<div class="t" style="left:435.68px;top:310px;font-size:8.50px;line-height:8.50px;transform:scaleX(0.9320);color:#222;-webkit-text-stroke:0.1px #222;">Hombre</div>
<div class="t" style="left:477.16px;top:310px;font-size:8.50px;line-height:8.50px;transform:scaleX(0.9320);color:#222;-webkit-text-stroke:0.1px #222;">PAR-M</div>
<div class="t" style="left:544.20px;top:310px;font-size:8.50px;line-height:8.50px;transform:scaleX(0.9320);color:#222;-webkit-text-stroke:0.1px #222;">7</div>
<div class="t" style="left:576.26px;top:310px;font-size:8.50px;line-height:8.50px;transform:scaleX(0.9320);color:#222;-webkit-text-stroke:0.1px #222;">Pardo y Labena</div>
<div class="t" style="left:786.54px;top:307px;font-size:14.60px;line-height:14.60px;letter-spacing:0.65px;transform:scaleX(0.5750);color:#3a3a3a;font-weight:bold;">1<span style="letter-spacing:-0.34px;position:relative;top:-1.3px">:</span>41<span style="letter-spacing:-0.34px;position:relative;top:-1.3px">:</span>21</div>
<div class="t" style="left:861.93px;top:307px;font-size:14.60px;line-height:14.60px;letter-spacing:0.65px;transform:scaleX(0.5750);color:#3a3a3a;font-weight:bold;">4<span style="letter-spacing:-0.34px;position:relative;top:-1.3px">:</span>31<span style="letter-spacing:-0.34px;position:relative;top:-1.3px">:</span>25</div>
<div class="t" style="left:928.23px;top:307px;font-size:14.60px;line-height:14.60px;letter-spacing:0.65px;transform:scaleX(0.5750);color:#e91e63;font-weight:bold;">4<span style="letter-spacing:-0.34px;position:relative;top:-1.3px">:</span>34<span style="letter-spacing:-0.34px;position:relative;top:-1.3px">:</span>16<span style="letter-spacing:0.12px">.</span>69</div>
<div class="t" style="left:989.36px;top:310px;font-size:8.50px;line-height:8.50px;transform:scaleX(0.9320);color:#222;-webkit-text-stroke:0.1px #222;">6,13</div>
<div class="t" style="left:55.24px;top:326px;font-size:8.50px;line-height:8.50px;transform:scaleX(1.0000);color:#222;font-weight:bold;">11</div>
<div class="t" style="left:71.91px;top:326px;font-size:8.50px;line-height:8.50px;transform:scaleX(0.9320);color:#222;-webkit-text-stroke:0.1px #222;">1282</div>
<div class="t" style="left:110.26px;top:326px;font-size:8.50px;line-height:8.50px;transform:scaleX(0.9320);color:#222;-webkit-text-stroke:0.1px #222;">PARDO LABENA Sergio</div>
<div class="t" style="left:435.68px;top:326px;font-size:8.50px;line-height:8.50px;transform:scaleX(0.9320);color:#222;-webkit-text-stroke:0.1px #222;">Hombre</div>
<div class="t" style="left:477.16px;top:326px;font-size:8.50px;line-height:8.50px;transform:scaleX(0.9320);color:#222;-webkit-text-stroke:0.1px #222;">PAR-M</div>
<div class="t" style="left:544.18px;top:326px;font-size:8.50px;line-height:8.50px;transform:scaleX(0.9320);color:#222;-webkit-text-stroke:0.1px #222;">8</div>
<div class="t" style="left:576.26px;top:326px;font-size:8.50px;line-height:8.50px;transform:scaleX(0.9320);color:#222;-webkit-text-stroke:0.1px #222;">Pardo y Labena</div>
<div class="t" style="left:786.58px;top:323px;font-size:14.60px;line-height:14.60px;letter-spacing:0.65px;transform:scaleX(0.5750);color:#3a3a3a;font-weight:bold;">1<span style="letter-spacing:-0.34px;position:relative;top:-1.3px">:</span>41<span style="letter-spacing:-0.34px;position:relative;top:-1.3px">:</span>23</div>
<div class="t" style="left:861.97px;top:323px;font-size:14.60px;line-height:14.60px;letter-spacing:0.65px;transform:scaleX(0.5750);color:#3a3a3a;font-weight:bold;">4<span style="letter-spacing:-0.34px;position:relative;top:-1.3px">:</span>31<span style="letter-spacing:-0.34px;position:relative;top:-1.3px">:</span>26</div>
<div class="t" style="left:928.25px;top:323px;font-size:14.60px;line-height:14.60px;letter-spacing:0.65px;transform:scaleX(0.5750);color:#e91e63;font-weight:bold;">4<span style="letter-spacing:-0.34px;position:relative;top:-1.3px">:</span>34<span style="letter-spacing:-0.34px;position:relative;top:-1.3px">:</span>16<span style="letter-spacing:0.12px">.</span>70</div>
<div class="t" style="left:989.36px;top:326px;font-size:8.50px;line-height:8.50px;transform:scaleX(0.9320);color:#222;-webkit-text-stroke:0.1px #222;">6,13</div>
<div class="t" style="left:54.91px;top:343px;font-size:8.50px;line-height:8.50px;transform:scaleX(1.0000);color:#222;font-weight:bold;">12</div>
<div class="t" style="left:71.91px;top:343px;font-size:8.50px;line-height:8.50px;transform:scaleX(0.9320);color:#222;-webkit-text-stroke:0.1px #222;">1295</div>
<div class="t" style="left:110.26px;top:343px;font-size:8.50px;line-height:8.50px;transform:scaleX(0.9320);color:#222;-webkit-text-stroke:0.1px #222;">SÁNCHEZ ROD Sergio</div>
<div class="t" style="left:297.16px;top:343px;font-size:8.50px;line-height:8.50px;transform:scaleX(0.9320);color:#222;-webkit-text-stroke:0.1px #222;">Parque de Teruel</div>
<div class="t" style="left:435.68px;top:343px;font-size:8.50px;line-height:8.50px;transform:scaleX(0.9320);color:#222;-webkit-text-stroke:0.1px #222;">Hombre</div>
<div class="t" style="left:477.16px;top:343px;font-size:8.50px;line-height:8.50px;transform:scaleX(0.9320);color:#222;-webkit-text-stroke:0.1px #222;">PAR-M</div>
<div class="t" style="left:544.20px;top:343px;font-size:8.50px;line-height:8.50px;transform:scaleX(0.9320);color:#222;-webkit-text-stroke:0.1px #222;">9</div>
<div class="t" style="left:576.26px;top:343px;font-size:8.50px;line-height:8.50px;transform:scaleX(0.9320);color:#222;-webkit-text-stroke:0.1px #222;">Parque de Teruel</div>
<div class="t" style="left:786.54px;top:340px;font-size:14.60px;line-height:14.60px;letter-spacing:0.65px;transform:scaleX(0.5750);color:#3a3a3a;font-weight:bold;">1<span style="letter-spacing:-0.34px;position:relative;top:-1.3px">:</span>50<span style="letter-spacing:-0.34px;position:relative;top:-1.3px">:</span>51</div>
<div class="t" style="left:861.99px;top:340px;font-size:14.60px;line-height:14.60px;letter-spacing:0.65px;transform:scaleX(0.5750);color:#3a3a3a;font-weight:bold;">4<span style="letter-spacing:-0.34px;position:relative;top:-1.3px">:</span>42<span style="letter-spacing:-0.34px;position:relative;top:-1.3px">:</span>22</div>
<div class="t" style="left:928.25px;top:340px;font-size:14.60px;line-height:14.60px;letter-spacing:0.65px;transform:scaleX(0.5750);color:#e91e63;font-weight:bold;">4<span style="letter-spacing:-0.34px;position:relative;top:-1.3px">:</span>45<span style="letter-spacing:-0.34px;position:relative;top:-1.3px">:</span>43<span style="letter-spacing:0.12px">.</span>70</div>
<div class="t" style="left:989.36px;top:343px;font-size:8.50px;line-height:8.50px;transform:scaleX(0.9320);color:#222;-webkit-text-stroke:0.1px #222;">5,88</div>
<div class="t" style="left:54.86px;top:360px;font-size:8.50px;line-height:8.50px;transform:scaleX(1.0000);color:#222;font-weight:bold;">13</div>
<div class="t" style="left:71.91px;top:360px;font-size:8.50px;line-height:8.50px;transform:scaleX(0.9320);color:#222;-webkit-text-stroke:0.1px #222;">1294</div>
<div class="t" style="left:110.26px;top:360px;font-size:8.50px;line-height:8.50px;transform:scaleX(0.9320);color:#222;-webkit-text-stroke:0.1px #222;">CIVERA PLUMADA Santiago</div>
<div class="t" style="left:297.16px;top:360px;font-size:8.50px;line-height:8.50px;transform:scaleX(0.9320);color:#222;-webkit-text-stroke:0.1px #222;">Parque de Teruel</div>
<div class="t" style="left:435.68px;top:360px;font-size:8.50px;line-height:8.50px;transform:scaleX(0.9320);color:#222;-webkit-text-stroke:0.1px #222;">Hombre</div>
<div class="t" style="left:477.16px;top:360px;font-size:8.50px;line-height:8.50px;transform:scaleX(0.9320);color:#222;-webkit-text-stroke:0.1px #222;">PAR-M</div>
<div class="t" style="left:541.84px;top:360px;font-size:8.50px;line-height:8.50px;transform:scaleX(0.9320);color:#222;-webkit-text-stroke:0.1px #222;">10</div>
<div class="t" style="left:576.26px;top:360px;font-size:8.50px;line-height:8.50px;transform:scaleX(0.9320);color:#222;-webkit-text-stroke:0.1px #222;">Parque de Teruel</div>
<div class="t" style="left:786.58px;top:356px;font-size:14.60px;line-height:14.60px;letter-spacing:0.65px;transform:scaleX(0.5750);color:#3a3a3a;font-weight:bold;">1<span style="letter-spacing:-0.34px;position:relative;top:-1.3px">:</span>50<span style="letter-spacing:-0.34px;position:relative;top:-1.3px">:</span>53</div>
<div class="t" style="left:861.93px;top:356px;font-size:14.60px;line-height:14.60px;letter-spacing:0.65px;transform:scaleX(0.5750);color:#3a3a3a;font-weight:bold;">4<span style="letter-spacing:-0.34px;position:relative;top:-1.3px">:</span>42<span style="letter-spacing:-0.34px;position:relative;top:-1.3px">:</span>21</div>
<div class="t" style="left:928.25px;top:356px;font-size:14.60px;line-height:14.60px;letter-spacing:0.65px;transform:scaleX(0.5750);color:#e91e63;font-weight:bold;">4<span style="letter-spacing:-0.34px;position:relative;top:-1.3px">:</span>45<span style="letter-spacing:-0.34px;position:relative;top:-1.3px">:</span>43<span style="letter-spacing:0.12px">.</span>70</div>
<div class="t" style="left:989.36px;top:360px;font-size:8.50px;line-height:8.50px;transform:scaleX(0.9320);color:#222;-webkit-text-stroke:0.1px #222;">5,88</div>
<div class="t" style="left:54.61px;top:376px;font-size:8.50px;line-height:8.50px;transform:scaleX(1.0000);color:#222;font-weight:bold;">14</div>
<div class="t" style="left:71.91px;top:376px;font-size:8.50px;line-height:8.50px;transform:scaleX(0.9320);color:#222;-webkit-text-stroke:0.1px #222;">1284</div>
<div class="t" style="left:110.26px;top:376px;font-size:8.50px;line-height:8.50px;transform:scaleX(0.9320);color:#222;-webkit-text-stroke:0.1px #222;">MENTUY MORÉ Francisco</div>
<div class="t" style="left:435.68px;top:376px;font-size:8.50px;line-height:8.50px;transform:scaleX(0.9320);color:#222;-webkit-text-stroke:0.1px #222;">Hombre</div>
<div class="t" style="left:477.16px;top:376px;font-size:8.50px;line-height:8.50px;transform:scaleX(0.9320);color:#222;-webkit-text-stroke:0.1px #222;">PAR-MX</div>
<div class="t" style="left:544.24px;top:376px;font-size:8.50px;line-height:8.50px;transform:scaleX(0.9320);color:#222;-webkit-text-stroke:0.1px #222;">4</div>
<div class="t" style="left:576.26px;top:376px;font-size:8.50px;line-height:8.50px;transform:scaleX(0.9320);color:#222;-webkit-text-stroke:0.1px #222;">patri y paco</div>
<div class="t" style="left:786.54px;top:373px;font-size:14.60px;line-height:14.60px;letter-spacing:0.65px;transform:scaleX(0.5750);color:#3a3a3a;font-weight:bold;">1<span style="letter-spacing:-0.34px;position:relative;top:-1.3px">:</span>51<span style="letter-spacing:-0.34px;position:relative;top:-1.3px">:</span>31</div>
<div class="t" style="left:861.93px;top:373px;font-size:14.60px;line-height:14.60px;letter-spacing:0.65px;transform:scaleX(0.5750);color:#3a3a3a;font-weight:bold;">4<span style="letter-spacing:-0.34px;position:relative;top:-1.3px">:</span>55<span style="letter-spacing:-0.34px;position:relative;top:-1.3px">:</span>35</div>
<div class="t" style="left:928.23px;top:373px;font-size:14.60px;line-height:14.60px;letter-spacing:0.65px;transform:scaleX(0.5750);color:#e91e63;font-weight:bold;">4<span style="letter-spacing:-0.34px;position:relative;top:-1.3px">:</span>58<span style="letter-spacing:-0.34px;position:relative;top:-1.3px">:</span>28<span style="letter-spacing:0.12px">.</span>43</div>
<div class="t" style="left:989.36px;top:376px;font-size:8.50px;line-height:8.50px;transform:scaleX(0.9320);color:#222;-webkit-text-stroke:0.1px #222;">5,63</div>
<div class="t" style="left:52.78px;top:393px;font-size:8.50px;line-height:8.50px;transform:scaleX(1.0000);color:#222;font-weight:bold;">15.</div>
<div class="t" style="left:71.91px;top:393px;font-size:8.50px;line-height:8.50px;transform:scaleX(0.9320);color:#222;-webkit-text-stroke:0.1px #222;">1248</div>
<div class="t" style="left:110.26px;top:393px;font-size:8.50px;line-height:8.50px;transform:scaleX(0.9320);color:#222;-webkit-text-stroke:0.1px #222;">Álex GORRIZ ALIAGA</div>
<div class="t" style="left:297.16px;top:393px;font-size:8.50px;line-height:8.50px;transform:scaleX(0.9320);color:#222;-webkit-text-stroke:0.1px #222;">CD Chafaaliagas Jérica</div>
<div class="t" style="left:435.68px;top:393px;font-size:8.50px;line-height:8.50px;transform:scaleX(0.9320);color:#222;-webkit-text-stroke:0.1px #222;">Hombre</div>
<div class="t" style="left:477.16px;top:393px;font-size:8.50px;line-height:8.50px;transform:scaleX(0.9320);color:#222;-webkit-text-stroke:0.1px #222;">PAR-MX</div>
<div class="t" style="left:544.20px;top:393px;font-size:8.50px;line-height:8.50px;transform:scaleX(0.9320);color:#222;-webkit-text-stroke:0.1px #222;">5</div>
<div class="t" style="left:576.26px;top:393px;font-size:8.50px;line-height:8.50px;transform:scaleX(0.9320);color:#222;-webkit-text-stroke:0.1px #222;">equipo de trail benaval</div>
<div class="t" style="left:786.58px;top:390px;font-size:14.60px;line-height:14.60px;letter-spacing:0.65px;transform:scaleX(0.5750);color:#3a3a3a;font-weight:bold;">1<span style="letter-spacing:-0.34px;position:relative;top:-1.3px">:</span>53<span style="letter-spacing:-0.34px;position:relative;top:-1.3px">:</span>43</div>
<div class="t" style="left:861.85px;top:390px;font-size:14.60px;line-height:14.60px;letter-spacing:0.65px;transform:scaleX(0.5750);color:#3a3a3a;font-weight:bold;">4<span style="letter-spacing:-0.34px;position:relative;top:-1.3px">:</span>55<span style="letter-spacing:-0.34px;position:relative;top:-1.3px">:</span>34</div>
<div class="t" style="left:928.21px;top:390px;font-size:14.60px;line-height:14.60px;letter-spacing:0.65px;transform:scaleX(0.5750);color:#e91e63;font-weight:bold;">4<span style="letter-spacing:-0.34px;position:relative;top:-1.3px">:</span>58<span style="letter-spacing:-0.34px;position:relative;top:-1.3px">:</span>36<span style="letter-spacing:0.12px">.</span>38</div>
<div class="t" style="left:989.36px;top:393px;font-size:8.50px;line-height:8.50px;transform:scaleX(0.9320);color:#222;-webkit-text-stroke:0.1px #222;">5,63</div>
<div class="t" style="left:26.30px;top:409px;font-size:8.50px;line-height:8.50px;transform:scaleX(1.0000);color:#222;font-weight:bold;">dieciséis.</div>
<div class="t" style="left:71.91px;top:409px;font-size:8.50px;line-height:8.50px;transform:scaleX(0.9320);color:#222;-webkit-text-stroke:0.1px #222;">1250</div>
<div class="t" style="left:110.26px;top:409px;font-size:8.50px;line-height:8.50px;transform:scaleX(0.9320);color:#222;-webkit-text-stroke:0.1px #222;">ARANDA MATAIX Carlos</div>
<div class="t" style="left:435.68px;top:409px;font-size:8.50px;line-height:8.50px;transform:scaleX(0.9320);color:#222;-webkit-text-stroke:0.1px #222;">Hombre</div>
<div class="t" style="left:477.16px;top:409px;font-size:8.50px;line-height:8.50px;transform:scaleX(0.9320);color:#222;-webkit-text-stroke:0.1px #222;">PAR-MX</div>
<div class="t" style="left:544.16px;top:409px;font-size:8.50px;line-height:8.50px;transform:scaleX(0.9320);color:#222;-webkit-text-stroke:0.1px #222;">6</div>
<div class="t" style="left:576.26px;top:409px;font-size:8.50px;line-height:8.50px;transform:scaleX(0.9320);color:#222;-webkit-text-stroke:0.1px #222;">Birras y Cimas</div>
<div class="t" style="left:786.54px;top:406px;font-size:14.60px;line-height:14.60px;letter-spacing:0.65px;transform:scaleX(0.5750);color:#3a3a3a;font-weight:bold;">1<span style="letter-spacing:-0.34px;position:relative;top:-1.3px">:</span>53<span style="letter-spacing:-0.34px;position:relative;top:-1.3px">:</span>35</div>
<div class="t" style="left:861.99px;top:406px;font-size:14.60px;line-height:14.60px;letter-spacing:0.65px;transform:scaleX(0.5750);color:#3a3a3a;font-weight:bold;">4<span style="letter-spacing:-0.34px;position:relative;top:-1.3px">:</span>58<span style="letter-spacing:-0.34px;position:relative;top:-1.3px">:</span>00</div>
<div class="t" style="left:928.12px;top:406px;font-size:14.60px;line-height:14.60px;letter-spacing:0.65px;transform:scaleX(0.5750);color:#e91e63;font-weight:bold;">5<span style="letter-spacing:-0.34px;position:relative;top:-1.3px">:</span>00<span style="letter-spacing:-0.34px;position:relative;top:-1.3px">:</span>38<span style="letter-spacing:0.12px">.</span>41</div>
<div class="t" style="left:989.36px;top:409px;font-size:8.50px;line-height:8.50px;transform:scaleX(0.9320);color:#222;-webkit-text-stroke:0.1px #222;">5,59</div>
<div class="t" style="left:54.91px;top:426px;font-size:8.50px;line-height:8.50px;transform:scaleX(1.0000);color:#222;font-weight:bold;">17</div>
<div class="t" style="left:71.91px;top:426px;font-size:8.50px;line-height:8.50px;transform:scaleX(0.9320);color:#222;-webkit-text-stroke:0.1px #222;">1259</div>
<div class="t" style="left:110.26px;top:426px;font-size:8.50px;line-height:8.50px;transform:scaleX(0.9320);color:#222;-webkit-text-stroke:0.1px #222;">PENELO SILVESTRE Ismael</div>
<div class="t" style="left:297.16px;top:426px;font-size:8.50px;line-height:8.50px;transform:scaleX(0.9320);color:#222;-webkit-text-stroke:0.1px #222;">Fisioterapia Penelo</div>
<div class="t" style="left:435.68px;top:426px;font-size:8.50px;line-height:8.50px;transform:scaleX(0.9320);color:#222;-webkit-text-stroke:0.1px #222;">Hombre</div>
<div class="t" style="left:477.16px;top:426px;font-size:8.50px;line-height:8.50px;transform:scaleX(0.9320);color:#222;-webkit-text-stroke:0.1px #222;">PAR-M</div>
<div class="t" style="left:542.18px;top:426px;font-size:8.50px;line-height:8.50px;transform:scaleX(0.9320);color:#222;-webkit-text-stroke:0.1px #222;">11</div>
<div class="t" style="left:576.26px;top:426px;font-size:8.50px;line-height:8.50px;transform:scaleX(0.9320);color:#222;-webkit-text-stroke:0.1px #222;">Fisioterapia Penelo</div>
<div class="t" style="left:786.58px;top:423px;font-size:14.60px;line-height:14.60px;letter-spacing:0.65px;transform:scaleX(0.5750);color:#3a3a3a;font-weight:bold;">1<span style="letter-spacing:-0.34px;position:relative;top:-1.3px">:</span>55<span style="letter-spacing:-0.34px;position:relative;top:-1.3px">:</span>06</div>
<div class="t" style="left:861.99px;top:423px;font-size:14.60px;line-height:14.60px;letter-spacing:0.65px;transform:scaleX(0.5750);color:#3a3a3a;font-weight:bold;">4<span style="letter-spacing:-0.34px;position:relative;top:-1.3px">:</span>58<span style="letter-spacing:-0.34px;position:relative;top:-1.3px">:</span>30</div>
<div class="t" style="left:928.19px;top:423px;font-size:14.60px;line-height:14.60px;letter-spacing:0.65px;transform:scaleX(0.5750);color:#e91e63;font-weight:bold;">5<span style="letter-spacing:-0.34px;position:relative;top:-1.3px">:</span>01<span style="letter-spacing:-0.34px;position:relative;top:-1.3px">:</span>28<span style="letter-spacing:0.12px">.</span>42</div>
<div class="t" style="left:989.36px;top:426px;font-size:8.50px;line-height:8.50px;transform:scaleX(0.9320);color:#222;-webkit-text-stroke:0.1px #222;">5,57</div>
<div class="t" style="left:54.82px;top:443px;font-size:8.50px;line-height:8.50px;transform:scaleX(1.0000);color:#222;font-weight:bold;">18</div>
<div class="t" style="left:71.91px;top:443px;font-size:8.50px;line-height:8.50px;transform:scaleX(0.9320);color:#222;-webkit-text-stroke:0.1px #222;">1292</div>
<div class="t" style="left:110.26px;top:443px;font-size:8.50px;line-height:8.50px;transform:scaleX(0.9320);color:#222;-webkit-text-stroke:0.1px #222;">ROMERO GUTIÉRREZ José Luis</div>
<div class="t" style="left:297.16px;top:443px;font-size:8.50px;line-height:8.50px;transform:scaleX(0.9320);color:#222;-webkit-text-stroke:0.1px #222;">Amics del clot</div>
<div class="t" style="left:435.68px;top:443px;font-size:8.50px;line-height:8.50px;transform:scaleX(0.9320);color:#222;-webkit-text-stroke:0.1px #222;">Hombre</div>
<div class="t" style="left:477.16px;top:443px;font-size:8.50px;line-height:8.50px;transform:scaleX(0.9320);color:#222;-webkit-text-stroke:0.1px #222;">PAR-MX</div>
<div class="t" style="left:544.20px;top:443px;font-size:8.50px;line-height:8.50px;transform:scaleX(0.9320);color:#222;-webkit-text-stroke:0.1px #222;">7</div>
<div class="t" style="left:576.26px;top:443px;font-size:8.50px;line-height:8.50px;transform:scaleX(0.9320);color:#222;-webkit-text-stroke:0.1px #222;">Equipo RO</div>
<div class="t" style="left:786.71px;top:440px;font-size:14.60px;line-height:14.60px;letter-spacing:0.65px;transform:scaleX(0.5750);color:#3a3a3a;font-weight:bold;">2<span style="letter-spacing:-0.34px;position:relative;top:-1.3px">:</span>03<span style="letter-spacing:-0.34px;position:relative;top:-1.3px">:</span>07</div>
<div class="t" style="left:861.93px;top:440px;font-size:14.60px;line-height:14.60px;letter-spacing:0.65px;transform:scaleX(0.5750);color:#3a3a3a;font-weight:bold;">5<span style="letter-spacing:-0.34px;position:relative;top:-1.3px">:</span>00<span style="letter-spacing:-0.34px;position:relative;top:-1.3px">:</span>52</div>
<div class="t" style="left:928.12px;top:440px;font-size:14.60px;line-height:14.60px;letter-spacing:0.65px;transform:scaleX(0.5750);color:#e91e63;font-weight:bold;">5<span style="letter-spacing:-0.34px;position:relative;top:-1.3px">:</span>03<span style="letter-spacing:-0.34px;position:relative;top:-1.3px">:</span>37<span style="letter-spacing:0.12px">.</span>21</div>
<div class="t" style="left:989.36px;top:443px;font-size:8.50px;line-height:8.50px;transform:scaleX(0.9320);color:#222;-webkit-text-stroke:0.1px #222;">5,53</div>
<div class="t" style="left:54.86px;top:459px;font-size:8.50px;line-height:8.50px;transform:scaleX(1.0000);color:#222;font-weight:bold;">19</div>
<div class="t" style="left:71.91px;top:459px;font-size:8.50px;line-height:8.50px;transform:scaleX(0.9320);color:#222;-webkit-text-stroke:0.1px #222;">1245</div>
<div class="t" style="left:110.26px;top:459px;font-size:8.50px;line-height:8.50px;transform:scaleX(0.9320);color:#222;-webkit-text-stroke:0.1px #222;">SERGIO HERNÁNDEZ CAMPOS</div>
<div class="t" style="left:297.16px;top:459px;font-size:8.50px;line-height:8.50px;transform:scaleX(0.9320);color:#222;-webkit-text-stroke:0.1px #222;">Fondistas de Alcorisa</div>
<div class="t" style="left:435.68px;top:459px;font-size:8.50px;line-height:8.50px;transform:scaleX(0.9320);color:#222;-webkit-text-stroke:0.1px #222;">Hombre</div>
<div class="t" style="left:477.16px;top:459px;font-size:8.50px;line-height:8.50px;transform:scaleX(0.9320);color:#222;-webkit-text-stroke:0.1px #222;">PAR-MX</div>
<div class="t" style="left:544.18px;top:459px;font-size:8.50px;line-height:8.50px;transform:scaleX(0.9320);color:#222;-webkit-text-stroke:0.1px #222;">8</div>
<div class="t" style="left:576.26px;top:459px;font-size:8.50px;line-height:8.50px;transform:scaleX(0.9320);color:#222;-webkit-text-stroke:0.1px #222;">Alcorisanos</div>
<div class="t" style="left:786.46px;top:456px;font-size:14.60px;line-height:14.60px;letter-spacing:0.65px;transform:scaleX(0.5750);color:#3a3a3a;font-weight:bold;">1<span style="letter-spacing:-0.34px;position:relative;top:-1.3px">:</span>53<span style="letter-spacing:-0.34px;position:relative;top:-1.3px">:</span>24</div>
<div class="t" style="left:861.87px;top:456px;font-size:14.60px;line-height:14.60px;letter-spacing:0.65px;transform:scaleX(0.5750);color:#3a3a3a;font-weight:bold;">5<span style="letter-spacing:-0.34px;position:relative;top:-1.3px">:</span>02<span style="letter-spacing:-0.34px;position:relative;top:-1.3px">:</span>21</div>
<div class="t" style="left:928.19px;top:456px;font-size:14.60px;line-height:14.60px;letter-spacing:0.65px;transform:scaleX(0.5750);color:#e91e63;font-weight:bold;">5<span style="letter-spacing:-0.34px;position:relative;top:-1.3px">:</span>05<span style="letter-spacing:-0.34px;position:relative;top:-1.3px">:</span>14<span style="letter-spacing:0.12px">.</span>50</div>
<div class="t" style="left:989.36px;top:459px;font-size:8.50px;line-height:8.50px;transform:scaleX(0.9320);color:#222;-webkit-text-stroke:0.1px #222;">5,50</div>
<div class="t" style="left:54.91px;top:476px;font-size:8.50px;line-height:8.50px;transform:scaleX(1.0000);color:#222;font-weight:bold;">20</div>
<div class="t" style="left:71.91px;top:476px;font-size:8.50px;line-height:8.50px;transform:scaleX(0.9320);color:#222;-webkit-text-stroke:0.1px #222;">1256</div>
<div class="t" style="left:110.26px;top:476px;font-size:8.50px;line-height:8.50px;transform:scaleX(0.9320);color:#222;-webkit-text-stroke:0.1px #222;">SALINAS JUAN ALBERTO</div>
<div class="t" style="left:435.68px;top:476px;font-size:8.50px;line-height:8.50px;transform:scaleX(0.9320);color:#222;-webkit-text-stroke:0.1px #222;">Hombre</div>
<div class="t" style="left:477.16px;top:476px;font-size:8.50px;line-height:8.50px;transform:scaleX(0.9320);color:#222;-webkit-text-stroke:0.1px #222;">PAR-MX</div>
<div class="t" style="left:544.20px;top:476px;font-size:8.50px;line-height:8.50px;transform:scaleX(0.9320);color:#222;-webkit-text-stroke:0.1px #222;">9</div>
<div class="t" style="left:576.26px;top:476px;font-size:8.50px;line-height:8.50px;transform:scaleX(0.9320);color:#222;-webkit-text-stroke:0.1px #222;">Equipo Dorrás</div>
<div class="t" style="left:786.54px;top:473px;font-size:14.60px;line-height:14.60px;letter-spacing:0.65px;transform:scaleX(0.5750);color:#3a3a3a;font-weight:bold;">1<span style="letter-spacing:-0.34px;position:relative;top:-1.3px">:</span>58<span style="letter-spacing:-0.34px;position:relative;top:-1.3px">:</span>15</div>
<div class="t" style="left:861.87px;top:473px;font-size:14.60px;line-height:14.60px;letter-spacing:0.65px;transform:scaleX(0.5750);color:#3a3a3a;font-weight:bold;">5<span style="letter-spacing:-0.34px;position:relative;top:-1.3px">:</span>08<span style="letter-spacing:-0.34px;position:relative;top:-1.3px">:</span>31</div>
<div class="t" style="left:928.35px;top:473px;font-size:14.60px;line-height:14.60px;letter-spacing:0.65px;transform:scaleX(0.5750);color:#e91e63;font-weight:bold;">5<span style="letter-spacing:-0.34px;position:relative;top:-1.3px">:</span>11<span style="letter-spacing:-0.34px;position:relative;top:-1.3px">:</span>40<span style="letter-spacing:0.12px">.</span>51</div>
<div class="t" style="left:989.36px;top:476px;font-size:8.50px;line-height:8.50px;transform:scaleX(0.9320);color:#222;-webkit-text-stroke:0.1px #222;">5,39</div>
<div class="t" style="left:54.78px;top:493px;font-size:8.50px;line-height:8.50px;transform:scaleX(1.0000);color:#222;font-weight:bold;">21</div>
<div class="t" style="left:71.91px;top:493px;font-size:8.50px;line-height:8.50px;transform:scaleX(0.9320);color:#222;-webkit-text-stroke:0.1px #222;">1281</div>
<div class="t" style="left:110.26px;top:493px;font-size:8.50px;line-height:8.50px;transform:scaleX(0.9320);color:#222;-webkit-text-stroke:0.1px #222;">ONDARRA MODREGO Sergio</div>
<div class="t" style="left:297.16px;top:493px;font-size:8.50px;line-height:8.50px;transform:scaleX(0.9320);color:#222;-webkit-text-stroke:0.1px #222;">NINGUNO</div>
<div class="t" style="left:435.68px;top:493px;font-size:8.50px;line-height:8.50px;transform:scaleX(0.9320);color:#222;-webkit-text-stroke:0.1px #222;">Hombre</div>
<div class="t" style="left:477.16px;top:493px;font-size:8.50px;line-height:8.50px;transform:scaleX(0.9320);color:#222;-webkit-text-stroke:0.1px #222;">PAR-M</div>
<div class="t" style="left:541.90px;top:493px;font-size:8.50px;line-height:8.50px;transform:scaleX(0.9320);color:#222;-webkit-text-stroke:0.1px #222;">12</div>
<div class="t" style="left:576.26px;top:493px;font-size:8.50px;line-height:8.50px;transform:scaleX(0.9320);color:#222;-webkit-text-stroke:0.1px #222;">ONDARRA</div>
<div class="t" style="left:786.58px;top:489px;font-size:14.60px;line-height:14.60px;letter-spacing:0.65px;transform:scaleX(0.5750);color:#3a3a3a;font-weight:bold;">1<span style="letter-spacing:-0.34px;position:relative;top:-1.3px">:</span>50<span style="letter-spacing:-0.34px;position:relative;top:-1.3px">:</span>46</div>
<div class="t" style="left:861.93px;top:489px;font-size:14.60px;line-height:14.60px;letter-spacing:0.65px;transform:scaleX(0.5750);color:#3a3a3a;font-weight:bold;">5<span style="letter-spacing:-0.34px;position:relative;top:-1.3px">:</span>19<span style="letter-spacing:-0.34px;position:relative;top:-1.3px">:</span>32</div>
<div class="t" style="left:928.17px;top:489px;font-size:14.60px;line-height:14.60px;letter-spacing:0.65px;transform:scaleX(0.5750);color:#e91e63;font-weight:bold;">5<span style="letter-spacing:-0.34px;position:relative;top:-1.3px">:</span>22<span style="letter-spacing:-0.34px;position:relative;top:-1.3px">:</span>53<span style="letter-spacing:0.12px">.</span>06</div>
<div class="t" style="left:989.36px;top:493px;font-size:8.50px;line-height:8.50px;transform:scaleX(0.9320);color:#222;-webkit-text-stroke:0.1px #222;">5,20</div>
<div class="t" style="left:786.56px;top:505px;font-size:14.60px;line-height:14.60px;letter-spacing:0.65px;transform:scaleX(0.5750);color:#c8c8c8;font-weight:bold;">1<span style="letter-spacing:-0.34px;position:relative;top:-1.3px">:</span>50<span style="letter-spacing:-0.34px;position:relative;top:-1.3px">:</span>48</div>
<div class="t" style="left:861.78px;top:505px;font-size:14.60px;line-height:14.60px;letter-spacing:0.65px;transform:scaleX(0.5750);color:#c8c8c8;font-weight:bold;">5<span style="letter-spacing:-0.34px;position:relative;top:-1.3px">:</span>19<span style="letter-spacing:-0.34px;position:relative;top:-1.3px">:</span>34</div>
<div class="t" style="left:928.12px;top:505px;font-size:14.60px;line-height:14.60px;letter-spacing:0.65px;transform:scaleX(0.5750);color:#f4a9c2;font-weight:bold;">5<span style="letter-spacing:-0.34px;position:relative;top:-1.3px">:</span>24<span style="letter-spacing:-0.34px;position:relative;top:-1.3px">:</span>31<span style="letter-spacing:0.12px">.</span>05</div>
</body></html>
